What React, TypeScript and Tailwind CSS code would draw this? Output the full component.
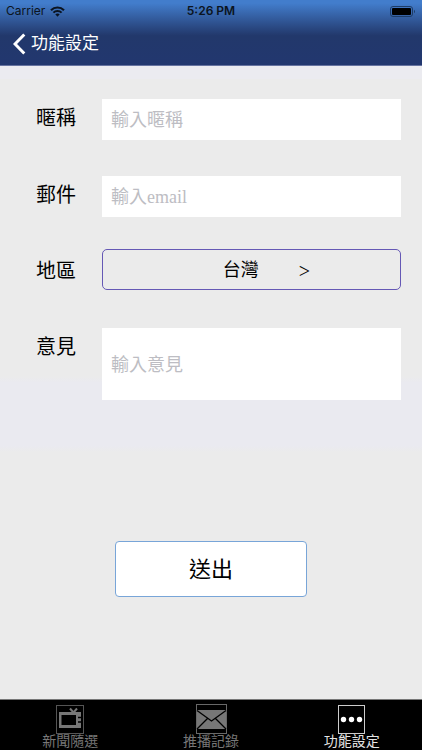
import type { ReactNode } from "react";

const boxClass =
  "min-w-0 flex-1 bg-white px-[9px] pt-[2px] text-[18px] text-black outline-none placeholder:text-[#bdbdc3] placeholder:opacity-100";

function StatusBar() {
  return (
    <div className="grid h-[22px] grid-cols-3 items-center px-[6px] font-['Inter',sans-serif] text-[12px] leading-[22px] text-[#0b1420]">
      <div className="flex items-center gap-[5px]">
        <span>Carrier</span>
        <svg width="15" height="11" viewBox="0 0 15 11" fill="none" aria-hidden="true">
          <path d="M1 4.2C4.6.5 10.4.5 14 4.2" stroke="#0b1420" strokeWidth="2.1" />
          <path d="M3.4 6.6c2.3-2.3 5.9-2.3 8.2 0" stroke="#0b1420" strokeWidth="2" />
          <path d="M5.3 8.3c1.2-1.2 3.2-1.2 4.4 0L7.5 10.7z" fill="#0b1420" />
        </svg>
      </div>
      <span className="text-center font-semibold">5:26 PM</span>
      <svg className="justify-self-end" width="26" height="11" viewBox="0 0 26 11" aria-hidden="true">
        <rect x=".5" y=".5" width="22" height="10" rx="2.5" fill="none" stroke="#1d3c66" />
        <rect x="2" y="2" width="19" height="7" rx="1" fill="#000" />
        <path d="M24 3.8c1.3.5 1.3 2.9 0 3.4z" fill="#1d3c66" />
      </svg>
    </div>
  );
}

function Row({ id, label, tall, children }: { id: string; label: string; tall?: boolean; children: ReactNode }) {
  return (
    <div className="flex items-start">
      <label
        htmlFor={id}
        className={`flex w-[66px] shrink-0 items-center pt-[2px] text-[20px] ${tall ? "h-[41px]" : "h-9"}`}
      >
        {label}
      </label>
      {children}
    </div>
  );
}

function Tab({ label, active, children }: { label: string; active?: boolean; children: ReactNode }) {
  return (
    <button
      type="button"
      aria-current={active ? "page" : undefined}
      className={`flex flex-1 flex-col items-center ${active ? "text-[#e4e4e4]" : "text-[#777]"}`}
    >
      <span className="flex h-[30px] items-center">{children}</span>
      <span className="text-[14px] leading-4">{label}</span>
    </button>
  );
}

export default function App() {
  return (
    <div className="flex min-h-screen flex-col bg-[#ebebeb] font-['Liberation_Serif','Noto_Sans_CJK_TC',sans-serif] text-black">
      <header className="h-[66px] border-b border-[#6673a0] bg-linear-to-b from-[#427dcc] from-5% via-[#22386b] via-55% to-[#22376f]">
        <StatusBar />
        <button type="button" className="flex h-[43px] items-center gap-[5px] pl-[13px] text-[17px] text-white">
          <svg width="13" height="22" viewBox="0 0 13 22" fill="none" aria-hidden="true">
            <path d="M11.3 1.5 2 11l9.3 9.5" stroke="white" strokeWidth="3" />
          </svg>
          功能設定
        </button>
      </header>

      <main className="flex-1 bg-[linear-gradient(#ebebf0_2%,#ebebeb_2%,#ebebeb_49%,#eaeaf0_50%,#eaeaf0_60%,#ebebeb_61%)]">
        <form className="flex flex-col pt-[33px] pr-[21px] pl-9" onSubmit={(e) => e.preventDefault()}>
          <div className="flex flex-col gap-9">
            <Row id="nickname" label="暱稱">
              <input id="nickname" type="text" placeholder="輸入暱稱" className={`${boxClass} h-[41px]`} />
            </Row>
            <Row id="email" label="郵件">
              <input id="email" type="email" placeholder="輸入email" className={`${boxClass} h-[41px]`} />
            </Row>
            <div className="-mt-1 flex flex-col gap-[38px]">
              <Row id="region" label="地區" tall>
                <button
                  id="region"
                  type="button"
                  className="flex h-[41px] flex-1 items-center justify-center gap-10 rounded-[5px] border border-[#6558b5] pt-[2px] pl-[30px] text-[18px]"
                >
                  <span>台灣</span>
                  <span className="text-[20px]">&gt;</span>
                </button>
              </Row>
              <Row id="opinion" label="意見">
                <input id="opinion" type="text" placeholder="輸入意見" className={`${boxClass} h-[72px]`} />
              </Row>
            </div>
          </div>
          <button
            type="submit"
            className="mt-[141px] mr-[15px] h-14 w-48 self-center rounded-[4px] border border-[#78a5d8] bg-white text-[22px]"
          >
            送出
          </button>
        </form>
      </main>

      <nav className="flex h-[51px] border-t border-[#777] bg-black pt-[4px]">
        <Tab label="新聞隨選">
          <svg width="28" height="29" viewBox="0 0 28 29" fill="none" aria-hidden="true">
            <rect x=".5" y=".5" width="27" height="28" stroke="#555" />
            <path d="M14 3.5 17.5 7.5M21 3.5 17.5 7.5" stroke="#777" strokeWidth="2" />
            <path fillRule="evenodd" d="M3 7h22v16H3zM5.500 10v10h14.500V10z" fill="#777" />
            <path d="M22 12.500h3M22 17h3" stroke="#000" strokeWidth="1.500" />
          </svg>
        </Tab>
        <Tab label="推播記錄">
          <svg width="31" height="30" viewBox="0 0 31 30" fill="none" aria-hidden="true">
            <rect x=".5" y=".5" width="30" height="29" stroke="#686868" />
            <path d="M1 6h29v19H1z" fill="#777" />
            <path d="m1 6.500 14.500 10.500L30 6.500M1 25l10.500-10.500M30 25 19.500 14.500" stroke="#000" strokeWidth="1.300" />
          </svg>
        </Tab>
        <Tab label="功能設定" active>
          <svg width="27" height="29" viewBox="0 0 27 29" fill="none" aria-hidden="true">
            <rect x=".5" y=".5" width="26" height="28" stroke="#ccc" />
            <circle cx="5.500" cy="14.500" r="2.700" fill="white" />
            <circle cx="13.500" cy="14.500" r="2.700" fill="white" />
            <circle cx="21.500" cy="14.500" r="2.700" fill="white" />
          </svg>
        </Tab>
      </nav>
    </div>
  );
}
